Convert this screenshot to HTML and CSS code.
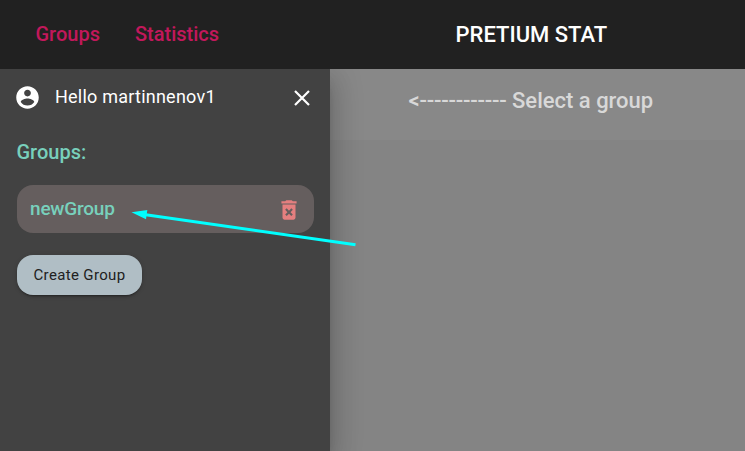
FILE: index.html
```html
<!DOCTYPE html>
<html lang="en">
<head>
<meta charset="utf-8">
<title>Pretium Stat</title>
<link rel="stylesheet" href="styles.css">
</head>
<body>
<header class="toolbar">
  <nav class="nav"><a class="nav-link">Groups</a><a class="nav-link">Statistics</a></nav>
  <h1 class="brand"><span>PRETIUM STAT</span></h1>
</header>
<div class="layout">
  <aside class="drawer">
    <div class="user">
      <svg class="avatar" viewBox="0 0 24 24"><path d="M12 2C6.48 2 2 6.48 2 12s4.480 10 10 10 10-4.480 10-10S17.520 2 12 2zm0 3c1.660 0 3 1.340 3 3s-1.340 3-3 3-3-1.340-3-3 1.340-3 3-3zm0 14.200c-2.500 0-4.710-1.280-6-3.220.030-1.990 4-3.080 6-3.080 1.990 0 5.970 1.090 6 3.080-1.290 1.940-3.500 3.220-6 3.220z"/></svg>
      <span class="hello">Hello martinnenov1</span>
      <svg class="close" viewBox="0 0 16 16"><path d="M1 1L15 15M15 1L1 15"/></svg>
    </div>
    <h2 class="heading"><span>Groups:</span></h2>
    <div class="group">
      <span class="group-name">newGroup</span>
      <svg class="trash" viewBox="0 0 24 24"><path fill-rule="evenodd" d="M6 19c0 1.100.9 2 2 2h8c1.100 0 2-.9 2-2V7H6zM8.460 11.880l1.410-1.410L12 12.590l2.120-2.120 1.410 1.410L13.410 14l2.120 2.120-1.410 1.410L12 15.410l-2.120 2.120-1.410-1.410L10.590 14zM15.500 4l-1-1h-5l-1 1H5v2h14V4z"/></svg>
    </div>
    <button class="create"><span>Create Group</span></button>
  </aside>
  <main class="content">
    <div class="prompt"><span class="arrow">&lt;------------</span> Select a group</div>
  </main>
</div>
<svg class="pointer" viewBox="0 0 230 42"><path class="shaft" d="M14 8.500L225.500 38.800"/><path class="tip" d="M1.500 6.300L17.300 4L16 13.300z"/></svg>
</body>
</html>
```

FILE: styles.css
```css
* { box-sizing: border-box; }
body {
  margin: 0;
  height: 451px;
  display: flex;
  flex-direction: column;
  overflow: hidden;
  position: relative;
  font-family: Roboto, sans-serif;
  background: #424242;
}
h1, h2 { margin: 0; font-weight: 500; }
.toolbar { height: 69px; flex: none; display: flex; align-items: center; background: #212121; }
.nav { width: 392px; padding: 0 0 2px 35.5px; display: flex; gap: 35px; }
.nav-link { font-size: 20px; font-weight: 500; line-height: 30px; color: #c2185b; }
.brand { padding-left: 63.5px; font-size: 22px; line-height: 30px; color: #fff; }
.layout { flex: 1; display: flex; overflow: hidden; }
.drawer {
  width: 330px;
  flex: none;
  padding: 0 16px 0 17px;
  background: #424242;
  position: relative;
  z-index: 1;
  box-shadow: 0 8px 10px -5px rgba(0,0,0,.2), 0 16px 24px 2px rgba(0,0,0,.14), 0 6px 30px 5px rgba(0,0,0,.12);
}
.user { height: 56px; display: flex; align-items: center; color: #fff; }
.avatar { width: 27px; height: 27px; margin-left: -3px; fill: #fff; }
.hello { margin-left: 14px; padding-bottom: 2px; font-size: 18px; letter-spacing: .23px; }
.close { width: 16px; height: 16px; margin: 2px 4px 0 auto; fill: none; stroke: #fff; stroke-width: 2.200; }
.heading { margin: 12px 0 0 -.5px; font-size: 20px; line-height: 30px; color: #78d0bc; }
.group {
  height: 48px;
  margin-top: 18px;
  padding: 0 13px;
  border-radius: 16px;
  display: flex;
  align-items: center;
  justify-content: space-between;
  background: #655e5e;
}
.group-name { padding-bottom: 2px; font-size: 19px; font-weight: 500; letter-spacing: -.2px; color: #78d0bc; }
.trash { width: 26px; height: 26px; margin-right: -1px; margin-top: 2px; fill: #e57f7f; }
.create {
  display: block;
  width: 125px;
  height: 40px;
  margin-top: 22px;
  padding: 0;
  border: 0;
  border-radius: 16px;
  background: #b0bec5;
  color: #212121;
  font: 400 15px/40px Roboto, sans-serif;
  letter-spacing: .35px;
  box-shadow: 0 3px 1px -2px rgba(0,0,0,.2), 0 2px 2px rgba(0,0,0,.14), 0 1px 5px rgba(0,0,0,.12);
}
.content { flex: 1; background: #848484; }
.prompt {
  height: 71px;
  padding: 17px 0 0 78.5px;
  background: #888;
  font-size: 22px;
  font-weight: 500;
  line-height: 30px;
  white-space: nowrap;
  color: #d8d8d8;
}
.arrow { letter-spacing: -.22px; }
.pointer { position: absolute; left: 130px; top: 206px; width: 230px; height: 42px; z-index: 2; }
.shaft { stroke: #0ff; stroke-width: 3; fill: none; }
.tip { fill: #0ff; }
```
